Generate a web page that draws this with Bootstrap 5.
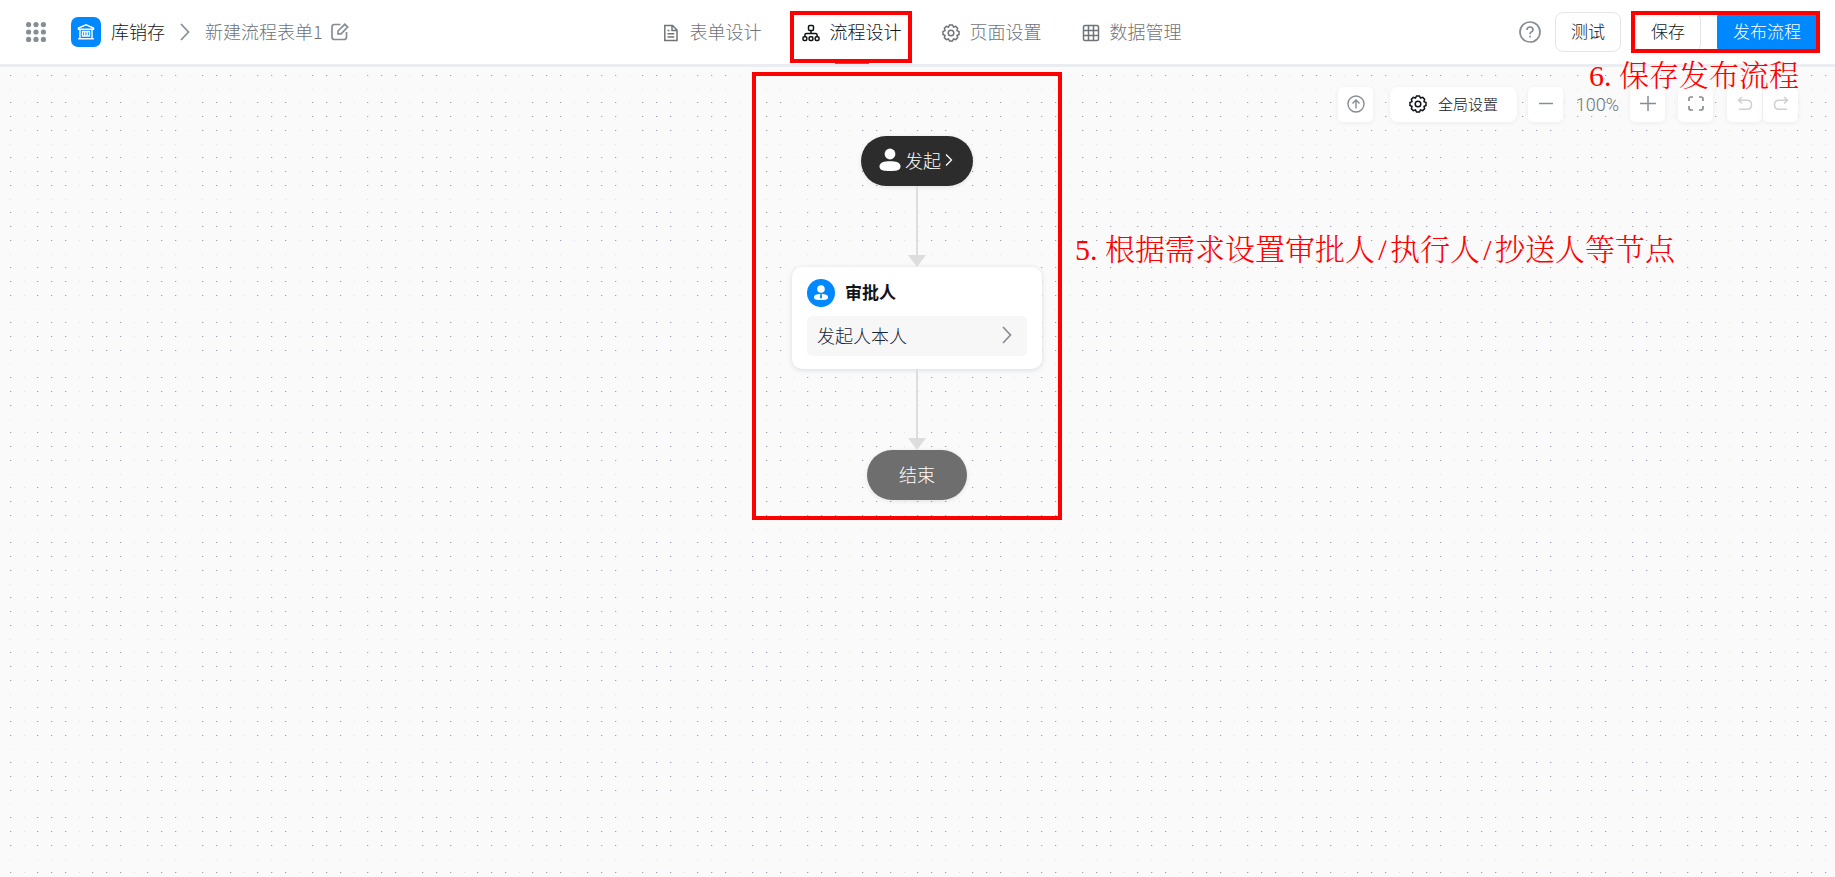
<!DOCTYPE html>
<html lang="zh-CN">
<head>
<meta charset="utf-8">
<meta name="viewport" content="width=device-width, initial-scale=1">
<title>流程设计</title>
<link href="https://cdn.jsdelivr.net/npm/bootstrap@5.3.0/dist/css/bootstrap.min.css" rel="stylesheet">
<style>
  body { font-family: "Noto Sans CJK SC", sans-serif; font-weight: 300; font-size: 18px; line-height: 26px; color: #111417; background: #fafafa; }
  svg { display: block; flex: none; fill: none; stroke: currentColor; }
  .topbar { height: 67px; background: #fff; border-bottom: 3px solid #ecedf2; padding: 0 18px 0 26px; }
  .side { flex: 1 1 0; }
  .muted { color: #707378; }
  .ico { color: #868d95; }
  .crumb { padding-bottom: 2px; }
  .crumb-sep { margin: 0 15px; }
  .applogo { width: 30px; height: 30px; border-radius: 7px; background: #0089ff; color: #fff; margin: 0 10px 0 25px; }
  .tabs { gap: 40px; }
  .tab { display: flex; align-items: center; gap: 10px; height: 64px; padding-bottom: 2px; color: #707378; text-decoration: none; position: relative; white-space: nowrap; }
  .tab svg { margin-top: 3px; }
  .tab.active { color: #111417; }
  .tab.active::after { content: ""; position: absolute; left: 50%; bottom: 0; width: 34px; height: 3px; margin-left: -17px; background: #2f7bea; }
  .actions { gap: 14px; }
  .hbtn { height: 40px; padding: 0 15px 2px; border: 1px solid #e4e6e9; border-radius: 8px; background: #fff; color: #111417; font-size: 17px; font-weight: 300; line-height: 26px; white-space: nowrap; }
  .hbtn.publish { background: #0089ff; border-color: #0089ff; color: #fff; border-radius: 5px; }
  .marker { position: absolute; border: 4px solid #f00; pointer-events: none; z-index: 3; }
  .marker-tab { inset: 11px -10px 1px -12px; }
  .marker-btn { inset: -1px -3px -1px -4px; }
  .marker-flow { inset: -64px -20px -20px -40px; }
  .note { position: absolute; margin: 0; color: #f00; font-family: "Liberation Serif", "Noto Serif CJK SC", "Noto Sans CJK SC", serif; font-size: 30px; line-height: 30px; white-space: nowrap; z-index: 4; pointer-events: none; }
  .note-save { top: -6px; right: 36px; }
  .note-flow { top: 99px; left: 283px; }
  .half { display: inline-block; width: 15px; text-align: center; }
  .board { flex: 1 0 auto; padding: 69px 1px 20px 0;
    background: #fafafa url("data:image/svg+xml,%3Csvg xmlns='http://www.w3.org/2000/svg' width='55' height='55' shape-rendering='crispEdges'%3E%3Cpath fill='%239c9daf' d='M10 8h1v1h-1zM37 8h1v1h-1zM51 8h1v1h-1zM10 35h1v1h-1zM37 35h1v1h-1zM51 35h1v1h-1zM10 49h1v1h-1zM37 49h1v1h-1zM51 49h1v1h-1z'/%3E%3Cpath fill='%23e2e2e6' d='M24 8h1v1h-1zM24 35h1v1h-1zM24 49h1v1h-1zM10 22h1v1h-1zM37 22h1v1h-1zM51 22h1v1h-1zM11 8h1v1h-1zM38 8h1v1h-1zM52 8h1v1h-1zM11 35h1v1h-1zM38 35h1v1h-1zM52 35h1v1h-1zM11 49h1v1h-1zM38 49h1v1h-1zM52 49h1v1h-1z'/%3E%3C/svg%3E") 0 0 / 55px 55px; }
  .tools { position: absolute; top: 20px; right: 37px; }
  .tool { width: 35px; height: 35px; border: 0; border-radius: 5px; background: #fff; padding: 0 0 2px; color: #868d95; box-shadow: 0 1px 5px rgba(0,0,0,.06); display: flex; align-items: center; justify-content: center; }
  .tool:disabled { color: #cdd0d4; }
  .tool.fit { margin: 0 14px 0 13px; }
  .tool.redo { margin-left: 1px; }
  .tool.global { width: 127px; border-radius: 8px; color: #111417; font-size: 15px; font-weight: 300; line-height: 22px; gap: 11px; margin: 0 11px 0 17px; }
  .zoomval { width: 67px; text-align: center; font: 300 18px/26px Roboto, sans-serif; color: #707378; padding-left: 2px; }
  .flow { width: 250px; }
  .pill { height: 50px; border: 0; border-radius: 25px; color: #fff; font-size: 18px; font-weight: 300; padding: 0 0 2px; box-shadow: 0 1px 5px rgba(0,0,0,.1); }
  .pill-start { width: 112px; background: #2c2c2c; padding-left: 18px; }
  .pill-end { width: 100px; background: #6e6e6e; }
  .link-line { width: 2px; height: 69px; background: #ddd; }
  .link-tip { width: 18px; height: 12px; background: #ddd; clip-path: polygon(0 0, 100% 0, 50% 100%); }
  .node { width: 100%; height: 102px; padding: 12px 15px; background: #fff; border-radius: 10px; box-shadow: 0 1px 5px rgba(30,50,80,.15); }
  .node-head { gap: 10px; }
  .avatar { width: 28px; height: 28px; border-radius: 50%; background: #0089ff; }
  .node h2 { font-size: 17px; line-height: 26px; font-weight: 700; margin: 0; padding-bottom: 2px; }
  .assignee { width: 100%; height: 40px; margin-top: 9px; padding: 0 15px 2px 10px; border: 0; border-radius: 5px; background: #f7f7f7; color: #1b2430; font-size: 18px; font-weight: 300; }
</style>
</head>
<body class="d-flex flex-column min-vh-100">
<header class="topbar d-flex align-items-center">
  <div class="side d-flex align-items-center">
    <a href="#" class="ico" aria-label="应用列表"><svg width="20" height="20" style="fill:currentColor;stroke:none"><circle cx="2.6" cy="2.6" r="2.6"/><circle cx="10" cy="2.6" r="2.6"/><circle cx="17.4" cy="2.6" r="2.6"/><circle cx="2.6" cy="10" r="2.6"/><circle cx="10" cy="10" r="2.6"/><circle cx="17.4" cy="10" r="2.6"/><circle cx="2.6" cy="17.4" r="2.6"/><circle cx="10" cy="17.4" r="2.6"/><circle cx="17.4" cy="17.4" r="2.6"/></svg></a>
    <span class="applogo d-flex align-items-center justify-content-center"><svg width="18" height="18" stroke-width="1.4"><path d="M1.500 6.200V5L9 1.800 16.500 5V6.200ZM3 6.500V15M15 6.500V15M1.200 15.800H16.800M5.500 8.500H12.500V13H5.500ZM7.800 8.500V13M10.200 8.500V13"/></svg></span>
    <span class="crumb">库销存</span>
    <svg class="ico crumb-sep" width="10" height="18" stroke-width="1.7"><path d="M1 1 8.500 9 1 17"/></svg>
    <span class="crumb muted">新建流程表单1</span>
    <a href="#" class="ico ms-2" aria-label="重命名"><svg width="18" height="18" stroke-width="1.7"><path d="M9.500 1.500H3.500Q1 1.500 1 4V14Q1 16.500 3.500 16.500H13Q15.500 16.500 15.500 14V9M7 10.800V8L13.800 1.300 16.700 4.100 10 10.800Z"/></svg></a>
  </div>
  <nav class="tabs d-flex">
    <a href="#" class="tab"><svg width="18" height="18" stroke-width="1.5"><path d="M2.800 1.500H10.500L15 6V16.500H2.800ZM10 1.700V6.500H15M5.500 6.500H7.500M5.500 9.700H12.300M5.500 13H12.300"/></svg>表单设计</a>
    <a href="#" class="tab active" aria-current="page"><svg width="18" height="18" stroke-width="1.5"><rect x="6.500" y="1.500" width="5" height="5" rx="1.200"/><rect x="1" y="12.700" width="3.800" height="3.800" rx="1.200"/><rect x="7.100" y="12.700" width="3.800" height="3.800" rx="1.200"/><rect x="13.200" y="12.700" width="3.800" height="3.800" rx="1.200"/><path d="M9 6.500V9.500M2.900 12.500V11Q2.900 9.500 4.400 9.500H13.600Q15.100 9.500 15.100 11V12.500"/></svg>流程设计<span class="marker marker-tab"></span></a>
    <a href="#" class="tab"><svg width="18" height="18" viewBox="0 0 18 18" stroke-width="1.500"><path d="M7.500 1H10.500L11.500 3 13.700 2.400 15.600 4.300 15 6.500 17 7.500V10.500L15 11.500 15.600 13.700 13.700 15.600 11.500 15 10.500 17H7.500L6.500 15 4.300 15.600 2.400 13.700 3 11.500 1 10.500V7.500L3 6.500 2.400 4.300 4.300 2.400 6.500 3Z"/><circle cx="9" cy="9" r="2.800"/></svg>页面设置</a>
    <a href="#" class="tab"><svg width="18" height="18" stroke-width="1.500"><rect x="1.500" y="1.500" width="15" height="15" rx="1.500"/><path d="M6.500 1.500V16.500M11.500 1.500V16.500M1.500 6.500H16.500M1.500 11.500H16.500"/></svg>数据管理</a>
  </nav>
  <div class="side actions d-flex align-items-center justify-content-end">
    <a href="#" class="ico" aria-label="帮助"><svg width="22" height="22" stroke-width="1.700"><circle cx="11" cy="11" r="10"/><path d="M8 9Q8 6 11 6T14 8.700Q14 10.200 12.300 11 11 11.700 11 13.200M11 14.800V16.500"/></svg></a>
    <button type="button" class="hbtn">测试</button>
    <div class="position-relative d-flex gap-3">
      <button type="button" class="hbtn">保存</button>
      <button type="button" class="hbtn publish">发布流程</button>
      <span class="marker marker-btn"></span>
    </div>
  </div>
</header>

<main class="board position-relative">
  <p class="note note-save">6. 保存发布流程</p>
  <div class="tools d-flex align-items-center">
    <button type="button" class="tool" aria-label="导出"><svg width="18" height="18" stroke-width="1.400"><circle cx="9" cy="9" r="8"/><path d="M9 13.500V5.500M5.500 8.500 9 5 12.500 8.500"/></svg></button>
    <button type="button" class="tool global"><svg width="18" height="18" stroke-width="1.500"><path d="M7.500 1H10.500L11.500 3 13.700 2.400 15.600 4.300 15 6.500 17 7.500V10.500L15 11.500 15.600 13.700 13.700 15.600 11.500 15 10.500 17H7.500L6.500 15 4.300 15.600 2.400 13.700 3 11.500 1 10.500V7.500L3 6.500 2.400 4.300 4.300 2.400 6.500 3Z"/><circle cx="9" cy="9" r="2.800"/></svg>全局设置</button>
    <button type="button" class="tool" aria-label="缩小"><svg width="16" height="16" stroke-width="1.500"><path d="M1 7.500H15"/></svg></button>
    <span class="zoomval">100%</span>
    <button type="button" class="tool" aria-label="放大"><svg width="16" height="16" stroke-width="1.500"><path d="M0 7.500H16M8 0V15"/></svg></button>
    <button type="button" class="tool fit" aria-label="全屏"><svg width="16" height="16" stroke-width="1.700"><path d="M1 5V3Q1 1 3 1H5M11 1H13Q15 1 15 3V5M15 10V12Q15 14 13 14H11M5 14H3Q1 14 1 12V10"/></svg></button>
    <button type="button" class="tool" aria-label="撤销" disabled><svg width="16" height="16" stroke-width="1.500"><path d="M5 1 1.500 4.300 5 7.500M1.500 4.300H10Q14.500 4.300 14.500 8.800T10 13.300H2"/></svg></button>
    <button type="button" class="tool redo" aria-label="重做" disabled><svg width="16" height="16" stroke-width="1.500"><path d="M11 1 14.500 4.300 11 7.500M14.500 4.300H6Q1.500 4.300 1.500 8.800T6 13.300H14"/></svg></button>
  </div>

  <div class="flow position-relative mx-auto d-flex flex-column align-items-center">
    <button type="button" class="pill pill-start d-flex align-items-center"><svg width="22" height="24" style="fill:#fff;stroke:none"><circle cx="11" cy="6" r="5.400"/><path d="M11 13.300C17 13.300 21.500 14.500 21.500 18.500S17 23 11 23 .5 22.500.5 18.500 5 13.300 11 13.300Z"/></svg><span class="mx-1">发起</span><svg width="8" height="12" stroke-width="1.300"><path d="M1 .5 6.500 6 1 11.500"/></svg></button>
    <div class="link-line"></div><div class="link-tip"></div>
    <section class="node">
      <div class="node-head d-flex align-items-center">
        <span class="avatar d-flex align-items-center justify-content-center"><svg width="16" height="16" style="fill:#fff;stroke:none"><circle cx="8" cy="4" r="3.800"/><path d="M8 9C12.500 9 15 9.800 15 12.300S12.500 15 8 15 1 14.800 1 12.300 3.500 9 8 9Z"/><path fill="#0089ff" d="M7.300 9H8.700L9 12.800 8 13.800 7 12.800Z"/></svg></span>
        <h2>审批人</h2>
      </div>
      <button type="button" class="assignee d-flex align-items-center justify-content-between">发起人本人<svg class="ico" width="10" height="18" stroke-width="1.700"><path d="M1 1 8.500 9 1 17"/></svg></button>
    </section>
    <div class="link-line"></div><div class="link-tip"></div>
    <div class="pill pill-end d-flex align-items-center justify-content-center">结束</div>
    <span class="marker marker-flow"></span>
    <p class="note note-flow">5. 根据需求设置审批人<span class="half">/</span>执行人<span class="half">/</span>抄送人等节点</p>
  </div>
</main>
<script src="https://cdn.jsdelivr.net/npm/bootstrap@5.3.0/dist/js/bootstrap.bundle.min.js"></script>
</body>
</html>
